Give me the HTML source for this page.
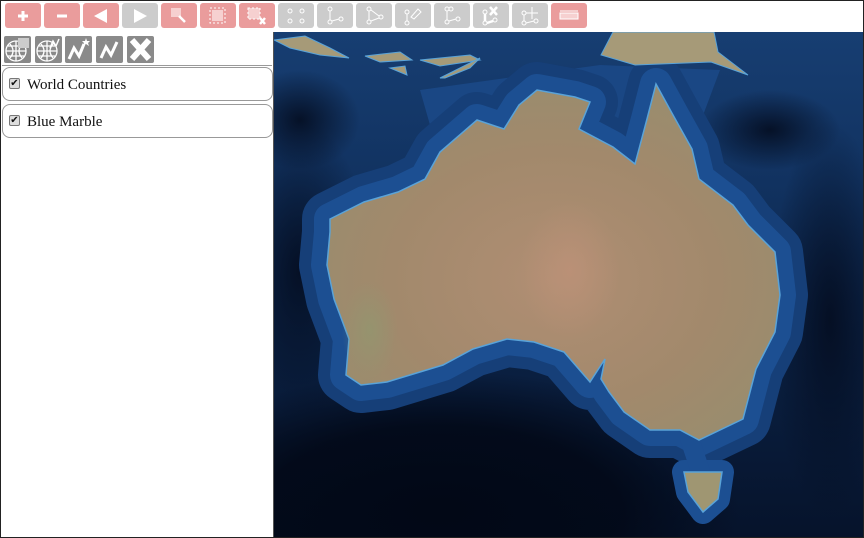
<!DOCTYPE html>
<html><head><meta charset="utf-8"><style>
*{margin:0;padding:0;box-sizing:border-box}
html,body{width:864px;height:538px;overflow:hidden}
body{background:#fff;font-family:"Liberation Serif",serif;position:relative}
.frame{position:absolute;left:0;top:0;width:864px;height:538px;border:1px solid #222;pointer-events:none;z-index:10}
.btn{position:absolute;top:3px;width:36px;height:25px;border-radius:3px;background:#cccccc}
.p{background:#ea9c9c}
.btn svg{position:absolute;left:0;top:0}
.panel{position:absolute;left:0;top:32px;width:274px;height:506px;border-right:1px solid #555;background:#fff;overflow:hidden}
.ic{position:absolute;top:4px;width:27px;height:27px;background:#8a8a8a;border-radius:2px}
.layer{position:absolute;left:2px;width:271px;height:34px;border:1px solid #999;border-radius:8px;font-size:15px;color:#111}
.layer .cb{position:absolute;left:6px;top:10px;width:11px;height:11px;border:1px solid #777;border-radius:2px;background:#ddd;font-size:10px;line-height:9px;text-align:center;font-family:"DejaVu Sans",sans-serif}
.layer span{position:absolute;left:24px;top:9px}
.map{position:absolute;left:274px;top:32px;width:590px;height:506px;overflow:hidden}
</style></head><body>
<div class="btn p" style="left:5px"><svg width="36" height="25"><path d="M18 8v10M13 13h10" stroke="#fff" stroke-width="3"/></svg></div>
<div class="btn p" style="left:44px"><svg width="36" height="25"><path d="M13 13h10" stroke="#fff" stroke-width="3"/></svg></div>
<div class="btn p" style="left:83px"><svg width="36" height="25"><path d="M24 6v14L11 13z" fill="#fff"/></svg></div>
<div class="btn" style="left:122px"><svg width="36" height="25"><path d="M12 6v14L25 13z" fill="#fff"/></svg></div>
<div class="btn p" style="left:161px"><svg width="36" height="25"><rect x="10" y="5" width="10" height="9" fill="#f6d0d0"/><path d="M18 13l6 6" stroke="#fff" stroke-width="2.5"/></svg></div>
<div class="btn p" style="left:200px"><svg width="36" height="25"><rect x="10" y="5" width="15" height="15" fill="none" stroke="#fff" stroke-dasharray="2 2"/><rect x="12" y="7" width="11" height="11" fill="#f6d0d0"/></svg></div>
<div class="btn p" style="left:239px"><svg width="36" height="25"><rect x="9" y="5" width="12" height="11" fill="#f6d0d0" stroke="#fff" stroke-dasharray="2 2"/><path d="M21 15l5 6M26 15l-5 6" stroke="#fff" stroke-width="2.5"/></svg></div>
<div class="btn" style="left:278px"><svg width="36" height="25" fill="none" stroke="#fff"><circle cx="12" cy="8" r="2"/><circle cx="24" cy="8" r="2"/><circle cx="12" cy="18" r="2"/><circle cx="24" cy="18" r="2"/></svg></div>
<div class="btn" style="left:317px"><svg width="36" height="25" fill="none" stroke="#fff"><circle cx="13" cy="6" r="2"/><circle cx="13" cy="19" r="2"/><circle cx="24" cy="16" r="2"/><path d="M13 8v9M15 18l7-2"/></svg></div>
<div class="btn" style="left:356px"><svg width="36" height="25" fill="none" stroke="#fff"><circle cx="13" cy="6" r="2"/><circle cx="13" cy="19" r="2"/><circle cx="25" cy="14" r="2"/><path d="M13 8v9M15 18l8-3M15 7l8 6"/></svg></div>
<div class="btn" style="left:395px"><svg width="36" height="25" fill="none" stroke="#fff"><circle cx="12" cy="9" r="2"/><circle cx="12" cy="20" r="2"/><path d="M12 11v7M16 14l7-8 3 3-7 7z" /></svg></div>
<div class="btn" style="left:434px"><svg width="36" height="25" fill="none" stroke="#fff"><circle cx="13" cy="6" r="2"/><circle cx="17" cy="6" r="2"/><circle cx="13" cy="19" r="2"/><circle cx="24" cy="16" r="2"/><path d="M13 8v9M15 18l7-2"/></svg></div>
<div class="btn" style="left:473px"><svg width="36" height="25" fill="none" stroke="#fff"><circle cx="12" cy="9" r="2"/><circle cx="12" cy="20" r="2"/><circle cx="22" cy="17" r="2"/><path d="M12 11v7M14 20l6-2M17 4l7 8M24 4l-7 8" stroke-width="2.5"/></svg></div>
<div class="btn" style="left:512px"><svg width="36" height="25" fill="none" stroke="#fff"><circle cx="12" cy="10" r="2"/><circle cx="12" cy="20" r="2"/><circle cx="24" cy="18" r="2"/><path d="M12 12v6M14 20l8-2M20 4v12M14 10h12"/></svg></div>
<div class="btn p" style="left:551px"><svg width="36" height="25"><rect x="9" y="10" width="18" height="6" fill="#f6d0d0" stroke="#fff"/><path d="M9 8h18" stroke="#fff"/></svg></div>

<div class="panel">
<div class="ic" style="left:4px;background:#888"><svg width="27" height="27" fill="none" stroke="#fff" stroke-width="1.3"><circle cx="12" cy="15" r="10"/><path d="M2 15h20M12 5v20M6 8q6 7 0 14M18 8q-6 7 0 14M4 10h16M4 20h16"/><rect x="14" y="2" width="11" height="10" fill="#ccc" stroke="none"/></svg></div>
<div class="ic" style="left:35px"><svg width="27" height="27" fill="none" stroke="#fff" stroke-width="1.3"><circle cx="12" cy="15" r="10"/><path d="M2 15h20M12 5v20M6 8q6 7 0 14M18 8q-6 7 0 14M4 10h16M4 20h16"/><path d="M15 12l3-7 3 5 3-7" stroke-width="1.5"/></svg></div>
<div class="ic" style="left:65px"><svg width="27" height="27" fill="none" stroke="#fff" stroke-width="3"><path d="M4 23l5-11 5 8 5-12"/><path d="M21 2l1 3h3l-2 2 1 3-3-2-3 2 1-3-2-2h3z" fill="#fff" stroke="none"/></svg></div>
<div class="ic" style="left:96px"><svg width="27" height="27" fill="none" stroke="#fff" stroke-width="3"><path d="M5 22l5-11 5 8 6-13"/></svg></div>
<div class="ic" style="left:127px"><svg width="27" height="27"><path d="M5 4l17 19M22 4L5 23" stroke="#fff" stroke-width="6"/></svg></div>
<div style="position:absolute;left:2px;top:33px;width:270px;border-top:1px solid #999"></div>
<div class="layer" style="top:35px"><div class="cb">✔</div><span>World Countries</span></div>
<div class="layer" style="top:72px"><div class="cb">✔</div><span>Blue Marble</span></div>
</div>

<div class="map">
<svg width="590" height="506" viewBox="274 32 590 506">
<defs>
<linearGradient id="sea" x1="0" y1="0" x2="0" y2="1"><stop offset="0" stop-color="#173e72"/><stop offset="0.3" stop-color="#113260"/><stop offset="0.6" stop-color="#0b2245"/><stop offset="1" stop-color="#06132b"/></linearGradient>
<radialGradient id="dk"><stop offset="0" stop-color="#020816"/><stop offset="0.6" stop-color="#020816" stop-opacity="0.85"/><stop offset="1" stop-color="#020816" stop-opacity="0"/></radialGradient>
<radialGradient id="dk2"><stop offset="0" stop-color="#040d20" stop-opacity="0.9"/><stop offset="1" stop-color="#040d20" stop-opacity="0"/></radialGradient>
<radialGradient id="land" cx="0.5" cy="0.55" r="0.6"><stop offset="0" stop-color="#b08e73"/><stop offset="0.6" stop-color="#a2896c"/><stop offset="1" stop-color="#988d6e"/></radialGradient>
<radialGradient id="red"><stop offset="0" stop-color="#c2937a" stop-opacity="0.6"/><stop offset="1" stop-color="#c2937a" stop-opacity="0"/></radialGradient>
<radialGradient id="grn"><stop offset="0" stop-color="#8f9a70" stop-opacity="0.6"/><stop offset="1" stop-color="#8f9a70" stop-opacity="0"/></radialGradient>
</defs>
<rect x="274" y="32" width="590" height="506" fill="url(#sea)"/>
<ellipse cx="440" cy="510" rx="300" ry="140" fill="url(#dk)"/>
<ellipse cx="300" cy="270" rx="70" ry="150" fill="url(#dk2)"/>
<ellipse cx="830" cy="320" rx="60" ry="200" fill="url(#dk2)"/>
<ellipse cx="300" cy="120" rx="60" ry="50" fill="url(#dk2)"/>
<ellipse cx="770" cy="130" rx="70" ry="40" fill="url(#dk2)"/>
<g stroke-linejoin="round">
<polygon fill="#1a4784" points="420,90 600,65 720,70 690,150 520,120 440,160"/>
<polygon fill="#163f78" stroke="#163f78" stroke-width="56" points="330,219 364,202 398,192 425,179 440,152 477,120 504,129 519,105 537,90 575,97 590,102 579,129 613,147 635,164 647,119 656,84 673,115 692,149 699,179 733,205 748,225 775,252 780,295 775,332 756,369 743,419 699,440 680,430 650,430 624,412 609,392 601,379 605,359 590,382 564,352 534,342 507,339 473,349 443,365 387,382 361,385 346,375 349,339 334,299 327,265 330,232"/>
<polygon fill="#1c4f92" stroke="#1c4f92" stroke-width="32" points="330,219 364,202 398,192 425,179 440,152 477,120 504,129 519,105 537,90 575,97 590,102 579,129 613,147 635,164 647,119 656,84 673,115 692,149 699,179 733,205 748,225 775,252 780,295 775,332 756,369 743,419 699,440 680,430 650,430 624,412 609,392 601,379 605,359 590,382 564,352 534,342 507,339 473,349 443,365 387,382 361,385 346,375 349,339 334,299 327,265 330,232"/>
<polygon fill="#1c4f92" stroke="#1c4f92" stroke-width="24" points="684,472 722,472 718,499 703,512 688,492"/>
<polygon fill="#1c4f92" points="680,440 700,440 710,470 690,470"/>
</g>
<polygon fill="url(#land)" stroke="#5aa3d8" stroke-width="1.5" points="330,219 364,202 398,192 425,179 440,152 477,120 504,129 519,105 537,90 575,97 590,102 579,129 613,147 635,164 647,119 656,84 673,115 692,149 699,179 733,205 748,225 775,252 780,295 775,332 756,369 743,419 699,440 680,430 650,430 624,412 609,392 601,379 605,359 590,382 564,352 534,342 507,339 473,349 443,365 387,382 361,385 346,375 349,339 334,299 327,265 330,232"/>
<ellipse cx="570" cy="270" rx="50" ry="70" fill="url(#red)"/>
<ellipse cx="370" cy="330" rx="28" ry="50" fill="url(#grn)"/>
<polygon fill="#9f9672" stroke="#5aa3d8" stroke-width="1.5" points="684,472 722,472 718,499 703,512 688,492"/>
<polygon fill="#a69a78" stroke="#5aa3d8" points="601,55 613,32 714,32 718,52 748,75 711,62 635,65"/>
<polygon fill="#a69a78" stroke="#5aa3d8" points="274,40 305,36 330,48 349,58 320,55 290,48"/>
<polygon fill="#a69a78" stroke="#5aa3d8" points="365,56 400,52 412,60 380,62"/>
<polygon fill="#a69a78" stroke="#5aa3d8" points="420,60 470,55 480,60 440,66"/>
<polygon fill="#a69a78" stroke="#5aa3d8" points="440,78 480,58 470,68 445,78"/>
<polygon fill="#a69a78" stroke="#5aa3d8" points="390,68 405,66 407,75"/>
</svg>
</div>
<div class="frame"></div>
</body></html>
